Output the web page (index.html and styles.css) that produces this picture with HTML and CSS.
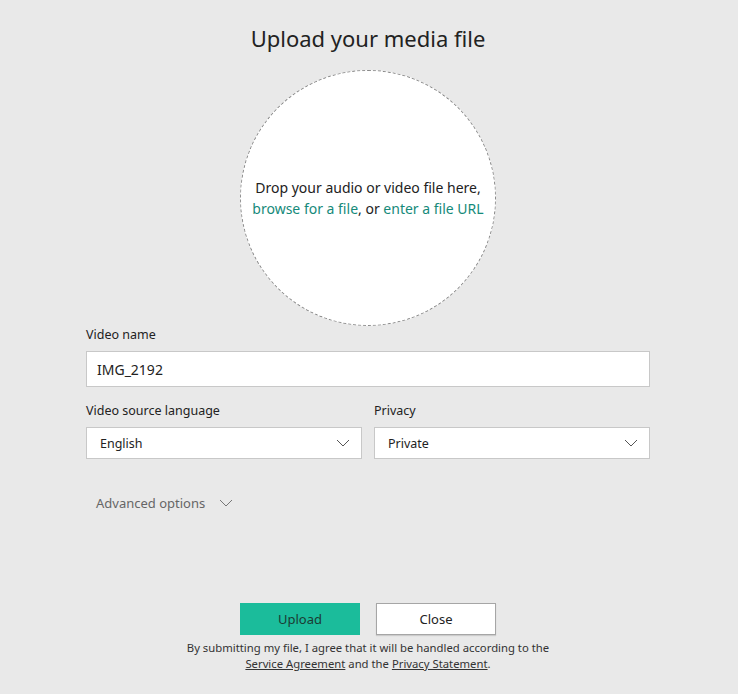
FILE: index.html
```html
<!DOCTYPE html>
<html lang="en">
<head>
<meta charset="utf-8">
<title>Upload your media file</title>
<link rel="stylesheet" href="styles.css">
</head>
<body>
<main class="dialog">
  <h1 class="title">Upload your media file</h1>
  <div class="drop">
    <p class="drop-text">Drop your audio or video file here,<br><a class="link" href="#">browse for a file</a>, or <a class="link" href="#">enter a file URL</a></p>
  </div>
  <form class="form">
    <label class="label">Video name</label>
    <input class="input" type="text" value="IMG_2192">
    <div class="row">
      <div class="col">
        <label class="label">Video source language</label>
        <div class="select"><span>English</span>
          <svg class="chev" width="14" height="8" viewBox="0 0 14 8"><path d="M1 1l6 6 6-6" fill="none" stroke="#555" stroke-width="1"/></svg>
        </div>
      </div>
      <div class="col">
        <label class="label">Privacy</label>
        <div class="select"><span>Private</span>
          <svg class="chev" width="14" height="8" viewBox="0 0 14 8"><path d="M1 1l6 6 6-6" fill="none" stroke="#555" stroke-width="1"/></svg>
        </div>
      </div>
    </div>
    <div class="advanced">Advanced options
      <svg class="chev-adv" width="14" height="8" viewBox="0 0 14 8"><path d="M1 1l6 6 6-6" fill="none" stroke="#777" stroke-width="1"/></svg>
    </div>
  </form>
  <div class="buttons">
    <button class="btn primary" type="button">Upload</button>
    <button class="btn secondary" type="button">Close</button>
  </div>
  <p class="legal">By submitting my file, I agree that it will be handled according to the<br><a href="#" class="u">Service Agreement</a> and the <a href="#" class="u">Privacy Statement</a>.</p>
</main>
</body>
</html>
```
FILE: styles.css
```css
html, body {
  margin: 0;
  padding: 0;
  background: #e9e9e9;
  font-family: "Noto Sans", "Open Sans", sans-serif;
  color: #252525;
}
.dialog {
  width: 564px;
  margin: 0 auto;
  display: flex;
  flex-direction: column;
  align-items: center;
  position: relative;
  left: -1px;
}
.title {
  font-weight: 400;
  font-size: 22px;
  margin: 22px 0 0;
  line-height: 32px;
  color: #222;
}
.drop {
  margin-top: 16px;
  width: 254px;
  height: 254px;
  border-radius: 50%;
  border: 1px dashed #8a8a8a;
  background: #fff;
  display: flex;
  align-items: center;
  justify-content: center;
}
.drop-text {
  margin: 0;
  text-align: center;
  font-size: 14px;
  line-height: 21px;
  color: #222;
}
.link {
  color: #168a7a;
  text-decoration: none;
}
.form {
  width: 100%;
  display: flex;
  flex-direction: column;
}
.label {
  display: block;
  font-size: 12.5px;
  line-height: 18px;
  color: #222;
  margin-bottom: 7px;
}
.input {
  box-sizing: border-box;
  width: 100%;
  height: 36px;
  margin-top: 0;
  border: 1px solid #c8c8c8;
  background: #fff;
  padding: 0 10px;
  font-family: inherit;
  font-size: 14px;
  color: #222;
  outline: none;
}
.row {
  display: grid;
  grid-template-columns: 1fr 1fr;
  gap: 12px;
  margin-top: 15px;
}
.select {
  box-sizing: border-box;
  height: 32px;
  border: 1px solid #c8c8c8;
  background: #fff;
  display: flex;
  align-items: center;
  justify-content: space-between;
  padding: 0 11px 0 13px;
  font-size: 12.5px;
  color: #222;
}
.advanced {
  margin-top: 35px;
  padding-left: 10px;
  font-size: 13px;
  color: #666;
  display: flex;
  align-items: center;
  gap: 14px;
}
.buttons {
  display: flex;
  gap: 16px;
  margin-top: 91px;
}
.btn {
  box-sizing: border-box;
  width: 120px;
  height: 32px;
  font-family: inherit;
  font-size: 13px;
  color: #222;
  cursor: pointer;
}
.primary {
  background: #1bbc9b;
  border: none;
  color: #1c3a33;
}
.secondary {
  background: #fff;
  border: 1px solid #a6a6a6;
  box-shadow: 0 1px 1px rgba(0,0,0,0.12);
}
.legal {
  margin: 5px 0 0;
  text-align: center;
  font-size: 11.3px;
  line-height: 16px;
  color: #333;
}
.u {
  color: #333;
  text-decoration: underline;
}
```
